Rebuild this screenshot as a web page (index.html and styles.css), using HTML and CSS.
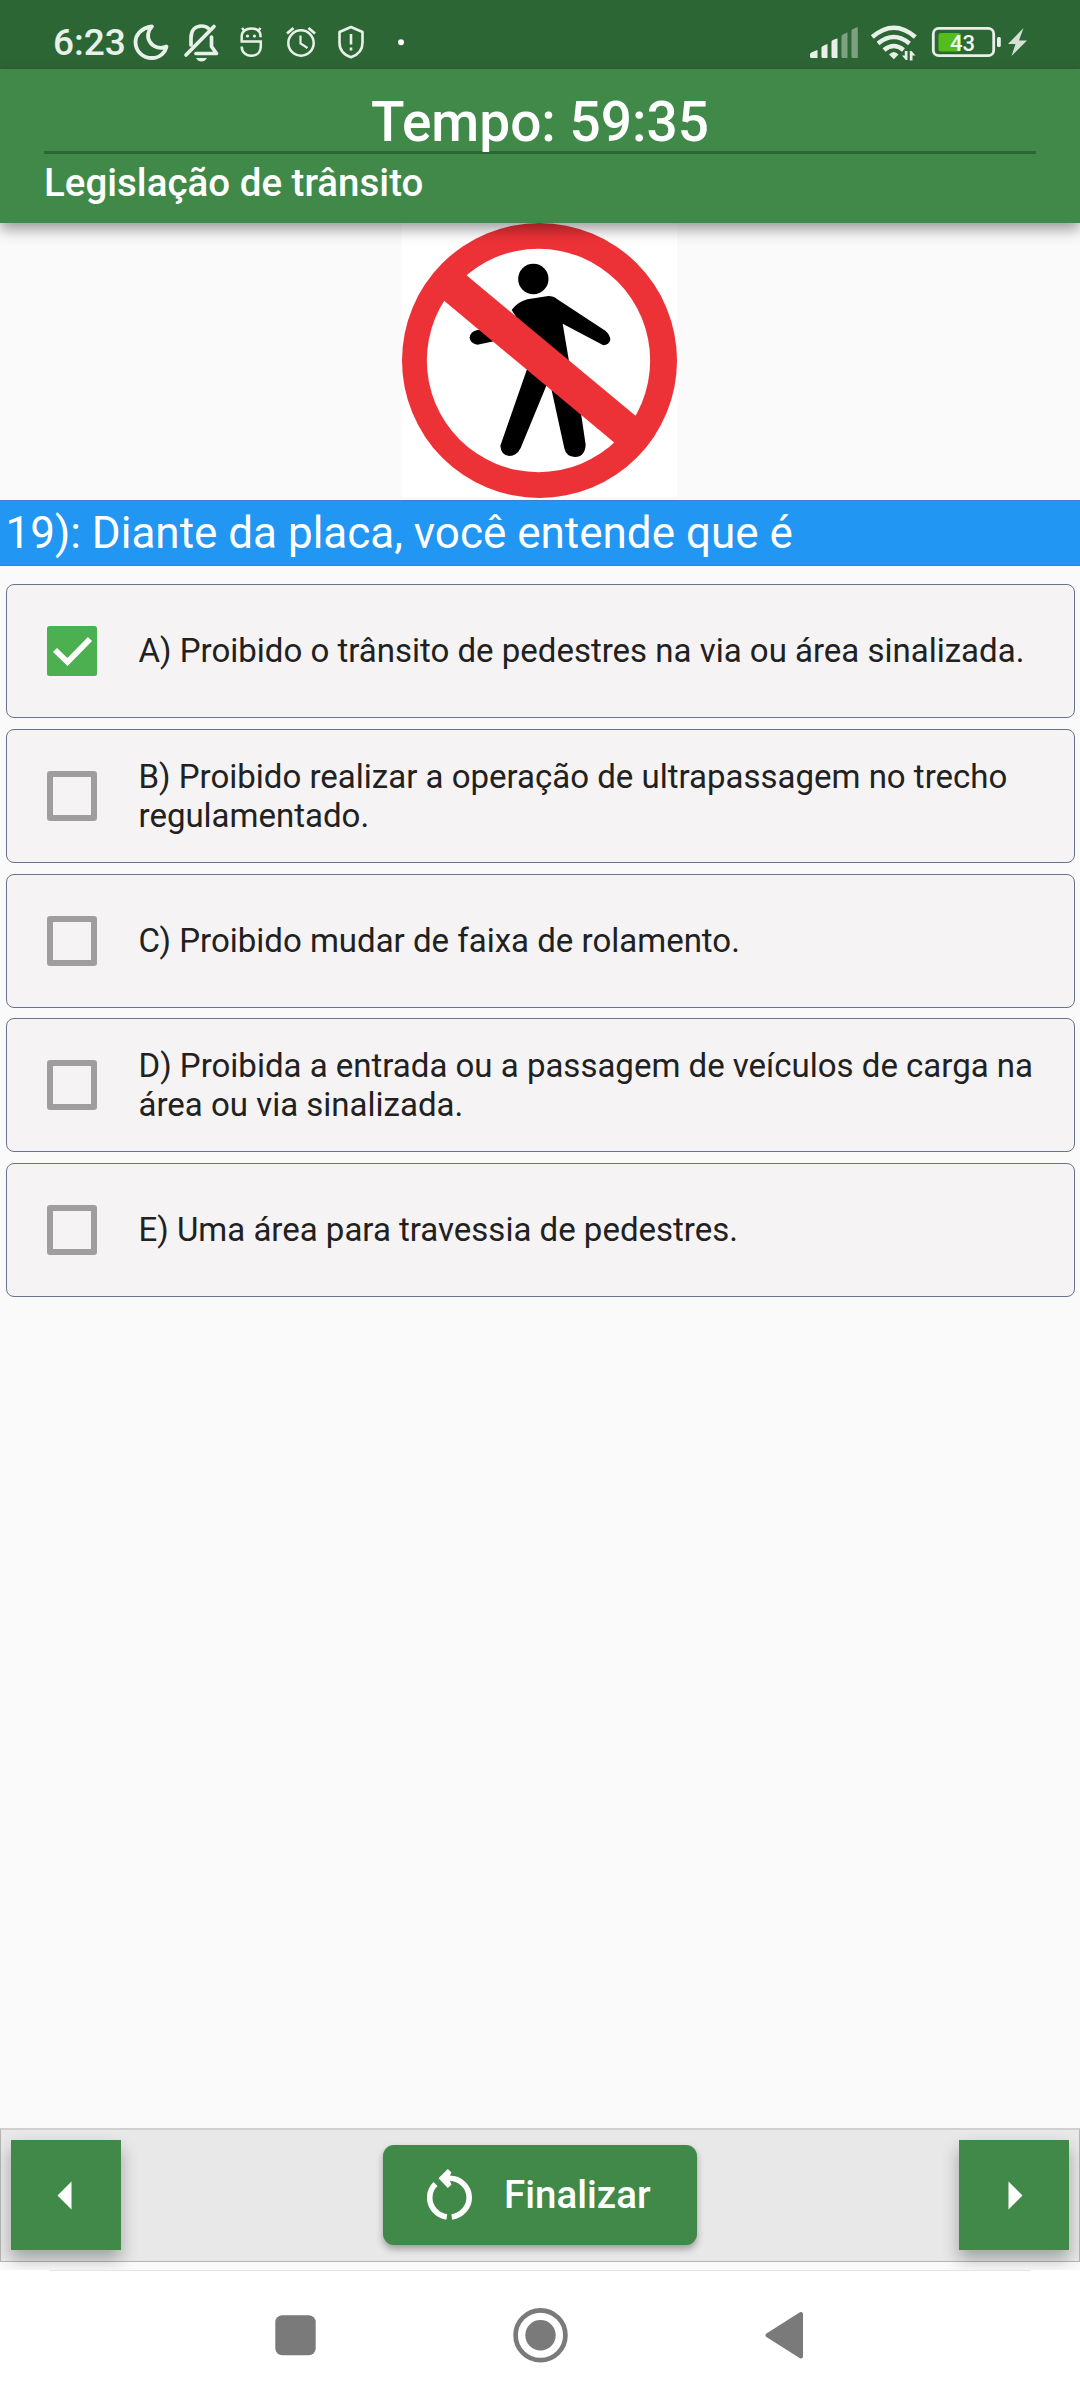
FILE: index.html
```html
<!DOCTYPE html>
<html lang="pt-BR">
<head>
<meta charset="utf-8">
<title>Legislação de trânsito</title>
<link rel="stylesheet" href="styles.css">
</head>
<body>
<div class="status">
  <span class="clock">6:23</span>
  <svg width="42" height="69" viewBox="130 0 42 69"><path d="M152 26.500C140 28 135.500 36 135.500 42C135.500 51.500 143 58 152 58C160 58 165.500 52 166.500 46.500C160 49.500 153 47 150 42C146.500 37 148 30.500 152 26.500Z" fill="none" stroke="#e9f0ea" stroke-width="3.800" stroke-linejoin="round"/></svg>
  <svg width="56" height="69" viewBox="172 0 56 69"><g fill="none" stroke="#e9f0ea" stroke-width="3.700" stroke-linecap="round" stroke-linejoin="round"><path d="M186 55L214 26.500"/><path d="M191 45V38C191 30 195.500 26 201.500 26C204.500 26 207 27 208.500 28.500"/><path d="M211.500 37V46.500L216.500 53.500H196"/></g><path d="M196 58H207Q205 61.500 201.500 61.500Q198 61.500 196 58Z" fill="#e9f0ea"/></svg>
  <svg width="44" height="69" viewBox="228 0 44 69"><g fill="none" stroke="#e9f0ea" stroke-width="2.500"><path d="M260.500 37.200V35.500C260.500 31 256.500 28.400 251.500 28.400C246 28.400 241.700 31.500 241.700 36.500V41.500H260.800V46C260.800 52 257 55.700 251.300 55.700C245.500 55.700 241.700 52 241.700 46.500"/><path d="M242 28L245 31.500M260.500 28L257.500 31.500"/></g><circle cx="247.500" cy="36" r="1.600" fill="#e9f0ea"/><circle cx="254.500" cy="36" r="1.600" fill="#e9f0ea"/></svg>
  <svg width="58" height="69" viewBox="272 0 58 69"><g fill="none" stroke="#e9f0ea" stroke-width="2.500"><circle cx="301" cy="43" r="12.700"/><path d="M300.500 35.500V43.500L307.500 48" stroke-width="2.200"/><path d="M287 33.500L293.500 28M315 33.500L308.500 28" stroke-width="2.800"/></g></svg>
  <svg width="42" height="69" viewBox="330 0 42 69"><path d="M351 27L362.500 32V43C362.500 50 357.500 55 351 57.300C344.500 55 339.500 50 339.500 43V32Z" fill="none" stroke="#e9f0ea" stroke-width="2.600" stroke-linejoin="round"/><path d="M351 34V44.500M351 47.500V50.500" stroke="#e9f0ea" stroke-width="2.600"/></svg>
  <svg width="60" height="69" viewBox="372 0 60 69"><circle cx="401" cy="42.300" r="3" fill="#fff"/></svg>
  <svg class="radio" width="58" height="69" viewBox="806 0 58 69"><g fill="#e9f0ea"><path d="M810 54Q810 52.500 817.500 50V58H811.500Q810 58 810 56.500ZM821.500 47.500Q821.500 46 827.500 44V58H823Q821.500 58 821.500 56.500ZM831.500 41.500Q831.500 40 837.500 38.500V58H833Q831.500 58 831.500 56.500Z"/><path d="M841.500 36Q841.500 34.500 847.500 32.500V58H843Q841.500 58 841.500 56.500ZM851.500 30.500Q851.500 29 857.800 27V58H853Q851.500 58 851.500 56.500Z" opacity=".42"/></g></svg>
  <svg width="60" height="69" viewBox="864 0 60 69"><g fill="none" stroke="#e9f0ea" stroke-width="4.500"><path d="M872.300 37Q893.800 18.500 915.300 37"/><path d="M878 43.500Q893.800 30.500 909.500 43.500"/><path d="M884 50Q893.800 42 903.500 50"/></g><path d="M889 54.500Q893.800 49.500 898.500 54.500L893.800 59.300Z" fill="#e9f0ea"/><path d="M907.500 51V60H905.800L902 55.500H904.800V51ZM909.800 60.500V51H911.500L915.500 55.500H912.500V60.500Z" fill="#e9f0ea"/></svg>
  <svg width="82" height="69" viewBox="924 0 82 69"><rect x="933.300" y="28.300" width="60.400" height="27.400" rx="5.500" fill="none" stroke="#e9f0ea" stroke-width="2.800"/><rect x="938.500" y="33" width="22.500" height="18.500" rx="2.500" fill="#54bd1b"/><rect x="997" y="37" width="3.800" height="10" rx="1.500" fill="#e9f0ea"/><text class="level" x="950" y="51">43</text></svg>
  <svg width="40" height="69" viewBox="1006 0 40 69"><path d="M1023.500 28L1008 44H1015.500L1011.500 56L1027 40.500H1019Z" fill="#d5e0d6"/></svg>
</div>
<header class="header">
  <h1 class="timer">Tempo: 59:35</h1>
  <h2 class="subject">Legislação de trânsito</h2>
</header>
<main class="quiz">
  <svg class="sign" viewBox="66 39 825 825">
    <rect x="66" y="39" width="825" height="825" fill="#fff"/>
    <circle cx="478.500" cy="451.500" r="412.500" fill="#ed3237"/>
    <circle cx="475.500" cy="451.500" r="335" fill="#fff"/>
    <circle cx="460" cy="207" r="45.500"/>
    <path d="M442 268L505 258Q520 258 532 268L676 362Q691 375 691 390Q687 405 670 406L548 341L568 460L603 610L617 704Q615 740 585 741Q558 740 553 715L512 527H499L422 714Q410 738 388 738Q363 736 361 707L442 475L460 400L395 300Q412 276 442 268Z"/>
    <path d="M292 360L345 362L360 390L292 404Q270 402 269 382Q272 364 292 360Z"/>
    <path d="M220 163L800 645L745 733L150 237Z" fill="#ed3237"/>
  </svg>
  <p class="question">19): Diante da placa, você entende que é</p>
  <div class="options">
    <label class="option"><svg class="box" viewBox="0 0 50 50"><rect width="50" height="50" rx="2.500" fill="#4caf50"/><path d="M8 24L20.500 36L43 13" fill="none" stroke="#fff" stroke-width="5.800"/></svg><span class="answer">A) Proibido o trânsito de pedestres na via ou área sinalizada.</span></label>
    <label class="option"><span class="box empty"></span><span class="answer">B) Proibido realizar a operação de ultrapassagem no trecho regulamentado.</span></label>
    <label class="option"><span class="box empty"></span><span class="answer">C) Proibido mudar de faixa de rolamento.</span></label>
    <label class="option"><span class="box empty"></span><span class="answer">D) Proibida a entrada ou a passagem de veículos de carga na área ou via sinalizada.</span></label>
    <label class="option"><span class="box empty"></span><span class="answer">E) Uma área para travessia de pedestres.</span></label>
  </div>
</main>
<footer class="toolbar">
  <button class="step"><svg width="110" height="110" viewBox="0 0 110 110"><path d="M46.500 55.500L60.500 41.500V69.500Z" fill="#fff"/></svg></button>
  <button class="finish">
    <svg width="46" height="52" viewBox="427 2169 46 52"><g fill="none" stroke="#fff" stroke-width="5.600"><path d="M446.800 2217C437 2215.500 429.700 2207.500 429.700 2197.500C429.700 2192 432 2187.500 435.500 2184"/><path d="M451.800 2217C461.500 2215.500 469.200 2207.500 469.200 2197.500C469.200 2187 460.500 2178.300 449.500 2178.300H443"/></g><path d="M438.500 2178.300L447.800 2169L451.500 2172.500L448.500 2178.300L451.500 2184.500L447.800 2188Z" fill="#fff"/></svg>
    <span>Finalizar</span>
  </button>
  <button class="step"><svg width="110" height="110" viewBox="0 0 110 110"><path d="M63.500 55.500L49.500 41.500V69.500Z" fill="#fff"/></svg></button>
</footer>
<nav class="nav">
  <svg width="41" height="55" viewBox="0 0 41 55"><rect x=".3" y="7.300" width="40.400" height="40" rx="7" fill="#7a7a7a"/></svg>
  <svg width="55" height="55" viewBox="0 0 55 55"><circle cx="27.500" cy="27.300" r="24.900" fill="none" stroke="#7a7a7a" stroke-width="4.700"/><circle cx="27.500" cy="27.300" r="15.200" fill="#7a7a7a"/></svg>
  <svg width="38" height="55" viewBox="0 0 38 55"><path d="M2.500 27.300L36 6V48.500Z" fill="#7a7a7a" stroke="#7a7a7a" stroke-width="4" stroke-linejoin="round"/></svg>
</nav>
</body>
</html>
```
FILE: styles.css
```css
* { box-sizing: border-box; }
body {
  margin: 0;
  width: 1080px;
  height: 2400px;
  display: flex;
  flex-direction: column;
  overflow: hidden;
  background: #fafafa;
  color: #212121;
  font-family: Roboto, sans-serif;
}
svg { display: block; flex: none; }
h1, h2, p { margin: 0; }
button { border: 0; padding: 0; font: inherit; color: #fff; background: #408948; }

.status {
  height: 69px;
  flex: none;
  display: flex;
  padding: 0 34px 0 53px;
  background: #2d6635;
}
.clock {
  width: 77px;
  line-height: 86px;
  font-size: 37px;
  font-weight: 500;
  color: #e9f0ea;
  white-space: nowrap;
}
.radio { margin-left: auto; }
.level { font: 500 22px Roboto, sans-serif; fill: #f2f7f2; }

.header {
  position: relative;
  z-index: 1;
  height: 154px;
  flex: none;
  padding: 22px 44px 0;
  background: #408948;
  color: #fff;
  box-shadow: 0 6px 14px rgba(0, 0, 0, .4);
}
.timer {
  height: 63px;
  border-bottom: 3px solid #2d6635;
  text-align: center;
  font-size: 55px;
  line-height: 62px;
  font-weight: 500;
}
.subject { font-size: 38.500px; line-height: 57px; font-weight: 500; }

.quiz { flex: 1; display: flex; flex-direction: column; }
.sign { width: 275px; height: 275px; align-self: center; margin-right: 1px; }
.question {
  height: 66px;
  margin-top: 2px;
  padding-left: 5.500px;
  background: #2196f3;
  border: solid #3f7fcb;
  border-width: 1px 0;
  color: #fff;
  font-size: 44px;
  line-height: 64px;
}
.options {
  display: flex;
  flex-direction: column;
  gap: 10.750px;
  padding: 18px 5.500px 0;
}
.option {
  height: 134px;
  flex: none;
  display: flex;
  align-items: center;
  gap: 41.500px;
  padding: 0 32px 0 40.500px;
  border: 1px solid #69738e;
  border-radius: 8px;
  background: #f5f3f4;
  font-size: 33px;
  line-height: 39px;
}
.answer { margin-bottom: .5px; }
.box { width: 50px; height: 50px; flex: none; }
.empty { border: 6px solid #9e9e9e; border-radius: 3px; }

.toolbar {
  height: 134px;
  flex: none;
  display: flex;
  align-items: center;
  justify-content: space-between;
  padding: 0 10px 2px;
  margin-bottom: 8px;
  border: 1px solid #b5b5b5;
  border-top: 2px solid #d0d0d0;
  background: #e8e8e8;
}
.step {
  width: 110px;
  height: 110px;
  box-shadow: 0 9px 16px rgba(0, 0, 0, .3);
}
.finish {
  width: 314px;
  height: 100px;
  display: flex;
  align-items: center;
  gap: 31px;
  padding-left: 44px;
  border-radius: 11px;
  box-shadow: 0 4px 7px rgba(0, 0, 0, .32);
  font-size: 38.500px;
  font-weight: 500;
}

.nav {
  position: relative;
  height: 130px;
  flex: none;
  display: flex;
  align-items: center;
  justify-content: center;
  gap: 197px;
  padding-right: 3px;
  background: linear-gradient(#e4e4e4, #e4e4e4) 50px 0 / 980px 1px no-repeat #fff;
}
```
